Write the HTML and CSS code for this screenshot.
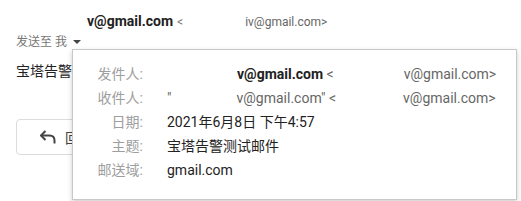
FILE: index.html
```html
<!DOCTYPE html>
<html lang="zh-CN">
<head>
<meta charset="utf-8">
<link rel="stylesheet" href="styles.css">
</head>
<body>
<div class="page">
  <div class="from-line"><span class="blank b-sender"></span><span class="name">v@gmail.com</span> <span class="lt">&lt;</span><span class="blank b-head"></span><span class="addr">iv@gmail.com&gt;</span></div>
  <div class="to-line">发送至 我 <span class="caret"></span></div>
  <div class="subject">宝塔告警测试邮件</div>
  <div class="actions">
    <div class="reply">
      <svg class="reply-icon" width="16" height="14" viewBox="0 0 16 14"><path d="M5.5 1 L1 5.5 L5.5 10" fill="none" stroke="#444" stroke-width="2"/><path d="M1.5 5.5 H9.5 Q14.5 5.5 14.5 10.5 V13.5" fill="none" stroke="#444" stroke-width="2"/></svg>
      <span class="reply-text">回复</span>
    </div>
  </div>
  <div class="popup">
    <div class="row"><span class="label">发件人:</span><span class="value"><span class="blank b-row1"></span><span class="name">v@gmail.com</span> <span class="lt">&lt;</span><span class="blank b-row1b"></span><span class="addr">v@gmail.com&gt;</span></span></div>
    <div class="row"><span class="label">收件人:</span><span class="value"><span class="addr">"</span><span class="blank b-row2"></span><span class="addr">v@gmail.com" &lt;</span><span class="blank b-row2b"></span><span class="addr">v@gmail.com&gt;</span></span></div>
    <div class="row"><span class="label">日期:</span><span class="value">2021年6月8日 下午4:57</span></div>
    <div class="row"><span class="label">主题:</span><span class="value">宝塔告警测试邮件</span></div>
    <div class="row"><span class="label">邮送域:</span><span class="value">gmail.com</span></div>
  </div>
</div>
</body>
</html>
```
FILE: styles.css
```css
html, body {
  margin: 0;
  padding: 0;
  background: #fff;
}
body {
  font-family: Roboto, "Noto Sans CJK SC", sans-serif;
  color: #222;
  width: 521px;
  height: 201px;
  overflow: hidden;
}
.page {
  position: relative;
  padding: 11px 16px 0;
}
.blank {
  display: inline-block;
}
.b-sender { width: 71px; }
.b-head { width: 62px; }
.from-line {
  height: 20px;
  line-height: 20px;
  white-space: nowrap;
}
.from-line .name {
  font-size: 14px;
  font-weight: bold;
  color: #222;
}
.lt {
  font-size: 12px;
  color: #777;
}
.addr {
  font-size: 12px;
  color: #666;
}
.to-line {
  margin-top: 2px;
  height: 18px;
  line-height: 18px;
  font-size: 12px;
  color: #777;
  display: flex;
  align-items: center;
}
.caret {
  display: inline-block;
  width: 0;
  height: 0;
  margin-left: 6px;
  border-left: 4px solid transparent;
  border-right: 4px solid transparent;
  border-top: 4px solid #444;
}
.subject {
  margin-top: 10px;
  height: 20px;
  line-height: 20px;
  font-size: 14px;
  color: #222;
}
.actions {
  margin-top: 38px;
}
.reply {
  box-sizing: border-box;
  width: 120px;
  height: 36px;
  border: 1px solid #dadce0;
  border-radius: 4px;
  display: flex;
  align-items: center;
  padding-left: 23px;
  gap: 9px;
}
.reply-icon {
  display: block;
}
.reply-text {
  font-size: 14px;
  color: #444;
}
.popup {
  position: absolute;
  left: 72px;
  top: 49px;
  width: 445px;
  height: 151px;
  box-sizing: border-box;
  background: #fff;
  border: 1px solid #c8c8c8;
  box-shadow: 0 2px 5px rgba(0,0,0,0.2);
  padding-top: 12px;
}
.row {
  display: grid;
  grid-template-columns: 70px auto;
  column-gap: 24px;
  height: 24px;
  line-height: 24px;
  white-space: nowrap;
}
.label {
  text-align: right;
  font-size: 14px;
  color: #9e9e9e;
}
.value {
  font-size: 14px;
  color: #222;
}
.value .name {
  font-size: 14px;
  font-weight: bold;
  color: #222;
}
.value .addr, .value .lt {
  font-size: 14px;
  color: #666;
}
.b-row1 { width: 70px; }
.b-row1b { width: 70px; }
.b-row2 { width: 65px; }
.b-row2b { width: 67px; }
```
